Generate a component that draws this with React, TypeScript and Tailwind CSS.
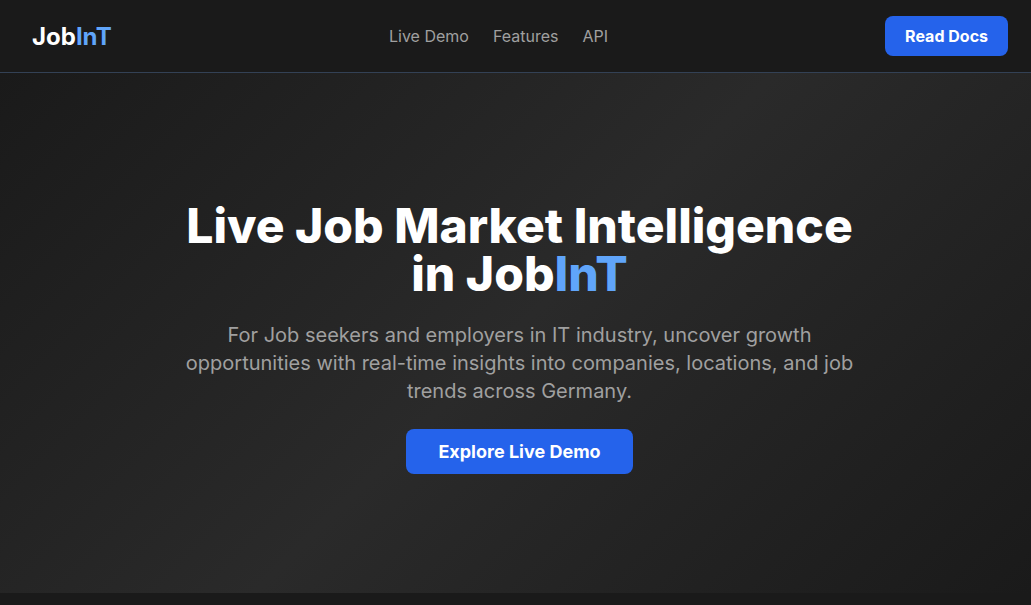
const links = [
  { label: "Live Demo", href: "#demo" },
  { label: "Features", href: "#features" },
  { label: "API", href: "#api" },
];

function Header() {
  return (
    <header className="border-b border-[#334155] bg-[#1a1a1a]">
      <div className="flex items-center justify-between py-4 pr-[23px] pl-8">
        <a href="#top" className="pt-px text-2xl font-bold text-white">
          Job<span className="text-[#60a5fa]">InT</span>
        </a>
        <nav className="flex gap-6">
          {links.map((link) => (
            <a key={link.label} href={link.href} className="text-[#a0a0a0]">
              {link.label}
            </a>
          ))}
        </nav>
        <button type="button" className="rounded-lg bg-[#2563eb] px-5 py-2 font-bold text-white">
          Read Docs
        </button>
      </div>
    </header>
  );
}

function Hero() {
  return (
    <section className="bg-[linear-gradient(135deg,#1a1a1a_0%,#2a2a2a_50%,#1a1a1a_100%)] pt-[129px] pr-6 pb-[119px] pl-8 text-center">
      <div className="mx-auto max-w-2xl">
        <h1 className="mb-[23px] text-5xl leading-none font-extrabold text-white">
          Live Job Market Intelligence in Job<span className="text-[#60a5fa]">InT</span>
        </h1>
        <p className="mb-6 text-xl text-[#a0a0a0]">
          For Job seekers and employers in IT industry, uncover growth opportunities with real-time
          insights into companies, locations, and job trends across Germany.
        </p>
        <button type="button" className="rounded-lg bg-[#2563eb] px-8 py-2 text-lg leading-[29px] font-bold text-white">
          Explore Live Demo
        </button>
      </div>
    </section>
  );
}

export default function App() {
  return (
    <div id="top" className="min-h-screen bg-[#1a1a1a] font-['Inter',sans-serif]">
      <Header />
      <main>
        <Hero />
      </main>
    </div>
  );
}
